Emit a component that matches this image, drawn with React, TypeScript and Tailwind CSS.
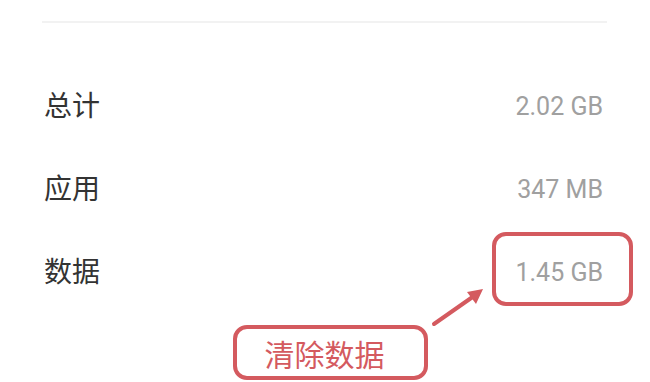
import React from "react";

const rows = [
  { label: "总计", value: "2.02 GB" },
  { label: "应用", value: "347 MB" },
  { label: "数据", value: "1.45 GB" },
];

export default function App() {
  return (
    <div className="relative w-[650px] h-[382px] bg-white overflow-hidden" style={{ fontFamily: '"Noto Sans", "Noto Sans CJK SC", sans-serif' }}>
      <div className="ml-[42px] mr-[43px] mt-[21px] h-[2px] bg-[#f2f2f2]" />
      <div className="flex flex-col pl-[44px] pr-[47px] mt-[39px]">
        {rows.map((r) => (
          <div key={r.label} className="flex items-center justify-between h-[83px]">
            <span className="text-[28px] leading-none text-[#333333]" style={{ fontFamily: '"Noto Sans CJK SC", sans-serif' }}>{r.label}</span>
            <span className="text-[25px] leading-none text-[#a0a0a0] pt-[5px]" style={{ fontFamily: 'Roboto, "Noto Sans", sans-serif' }}>{r.value}</span>
          </div>
        ))}
      </div>
      <div className="absolute left-[492px] top-[232px] w-[141px] h-[74px] rounded-[14px] border-[4px] border-[#d45a5f]" />
      <svg className="absolute left-0 top-0" width="650" height="382">
        <line x1="434" y1="324" x2="474" y2="296" stroke="#d45a5f" strokeWidth="4" strokeLinecap="round" />
        <polygon points="483,289 467,292 476,304" fill="#d45a5f" />
      </svg>
      <div className="absolute left-[233px] top-[325px] w-[195px] h-[55px] rounded-[14px] border-[4px] border-[#d45a5f] flex items-center justify-center pr-[12px]">
        <span className="text-[30px] leading-none text-[#d45a5f]" style={{ fontFamily: '"Noto Sans CJK SC", sans-serif' }}>清除数据</span>
      </div>
    </div>
  );
}
